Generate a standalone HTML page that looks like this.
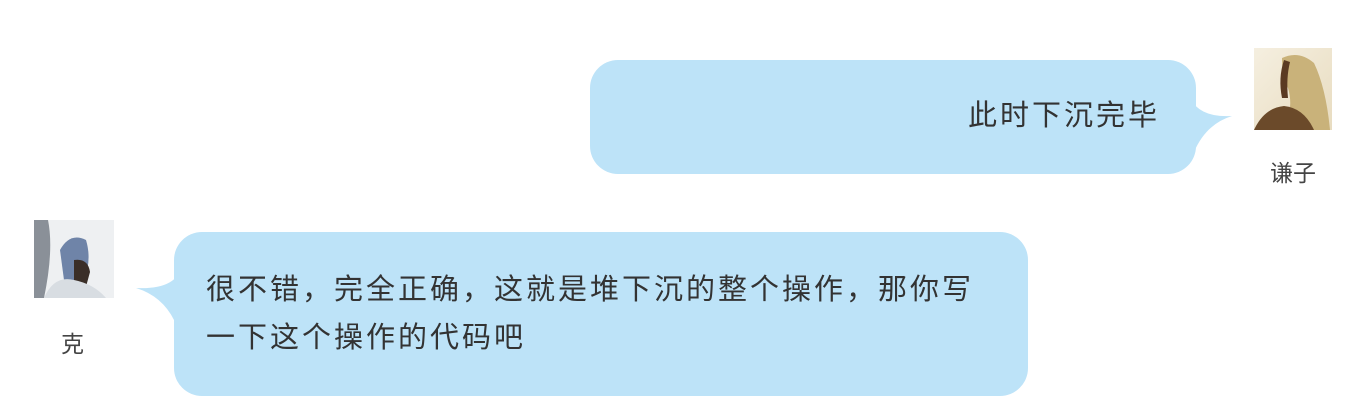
<!DOCTYPE html>
<html><head><meta charset="utf-8"><style>
body{margin:0;width:1352px;height:406px;background:#fff;position:relative;overflow:hidden;font-family:"Liberation Sans","Noto Sans CJK SC",sans-serif;color:#333}
.b{position:absolute;background:#bde3f8;border-radius:28px}
.t{position:absolute;font-size:29px;letter-spacing:3px;line-height:48px;white-space:nowrap}
.n{position:absolute;font-size:23px;color:#444;line-height:30px}
.av{position:absolute}
</style></head><body>
<div class="b" style="left:590px;top:60px;width:606px;height:114px"></div>
<svg style="position:absolute;left:1170px;top:90px" width="70" height="70"><path d="M0 8 L20 8 Q30 28 62 26 Q36 34 24 62 L0 62Z" fill="#bde3f8"/></svg>
<div class="t" style="left:968px;top:92px">此时下沉完毕</div>
<svg class="av" style="left:1254px;top:48px" width="78" height="82">
<defs><linearGradient id="g1" x1="0" y1="0" x2="1" y2="1"><stop offset="0" stop-color="#f5efe0"/><stop offset="1" stop-color="#e8dcc0"/></linearGradient></defs>
<rect width="78" height="82" fill="url(#g1)"/>
<path d="M28 10 Q45 2 60 15 Q72 40 76 82 L30 82 Q40 60 34 40 Q28 30 28 10Z" fill="#c9b27a"/>
<path d="M30 12 Q24 30 28 50 L34 50 Q32 30 36 14Z" fill="#5a3a22"/>
<path d="M0 82 Q10 60 30 58 Q50 60 60 82Z" fill="#6b4a2a"/>
</svg>
<div class="n" style="left:1270px;top:158px">谦子</div>

<div class="b" style="left:174px;top:232px;width:854px;height:164px"></div>
<svg style="position:absolute;left:132px;top:260px" width="70" height="70"><path d="M70 6 L50 6 Q44 30 4 28 Q30 36 42 60 L70 60Z" fill="#bde3f8"/></svg>
<div class="t" style="left:206px;top:266px">很不错，完全正确，这就是堆下沉的整个操作，那你写</div>
<div class="t" style="left:206px;top:314px">一下这个操作的代码吧</div>
<svg class="av" style="left:34px;top:220px" width="80" height="78">
<rect width="80" height="78" fill="#eef0f2"/>
<path d="M0 0 L14 0 Q20 30 10 78 L0 78Z" fill="#8a9098"/>
<path d="M26 30 Q36 12 52 20 Q58 40 50 60 L30 60Z" fill="#6f84a8"/>
<path d="M40 40 Q54 38 56 52 L50 74 L40 70Z" fill="#3a2e28"/>
<path d="M10 78 Q20 55 40 60 Q60 64 72 78Z" fill="#d8dde2"/>
</svg>
<div class="n" style="left:61px;top:329px">克</div>
</body></html>
